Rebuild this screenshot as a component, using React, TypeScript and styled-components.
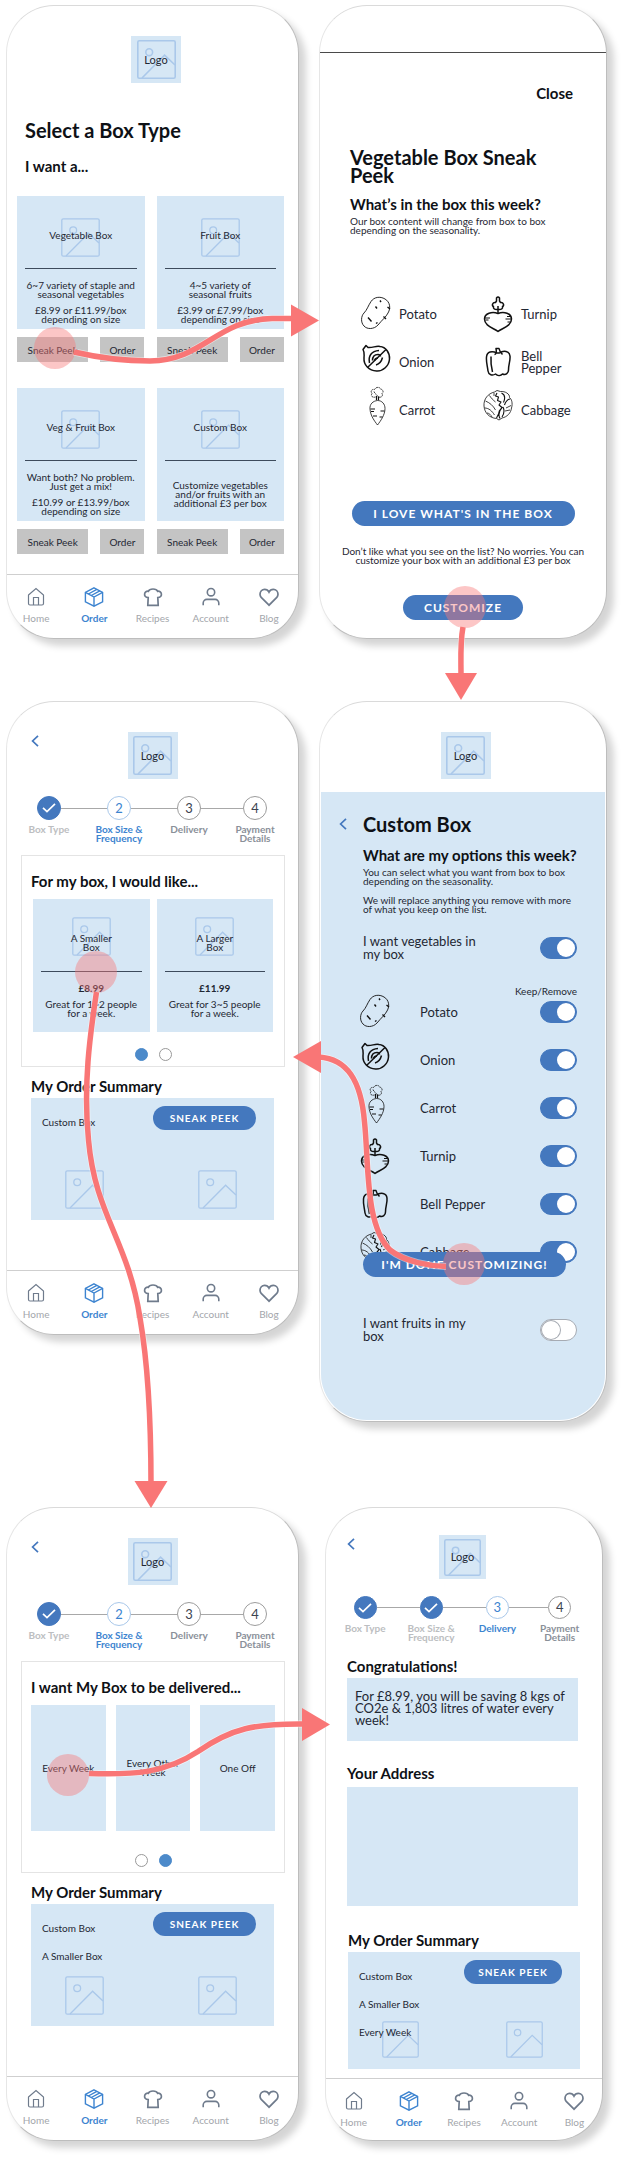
import React from "react";
import styled, { createGlobalStyle, css } from "styled-components";

const color = {
  ink: "#0e1116",
  text: "#1f2733",
  pale: "#d6e7f5",
  sketch: "#aac8ea",
  blue: "#4478be",
  link: "#3d84d0",
  grey: "#c4c4c4",
  muted: "#a3a6ab",
  slate: "#6f7b8c",
  coral: "#f97676",
};

const GlobalStyle = createGlobalStyle`
  * { box-sizing: border-box; }
  body { margin: 0; background: #fff; }
  body, button, input, textarea { font-family: Lato, "Open Sans", sans-serif; color: ${color.text}; }
  h1, h2, h3, p, ul, ol { margin: 0; padding: 0; }
  ul, ol { list-style: none; }
  button { border: 0; padding: 0; background: none; cursor: pointer; }
`;

/* ---------- board and phone frames ---------- */

const Board = styled.main`
  position: relative;
  display: grid;
  grid-template-columns: 293fr 288fr;
  gap: 62px 20px;
  align-items: start;
  padding: 5px 23px 23px 6px;
`;

const Phone = styled.section<{ $tall?: boolean; $last?: boolean; $narrow?: boolean }>`
  display: flex;
  flex-direction: column;
  min-height: ${(p) => (p.$tall ? 721 : 634)}px;
  margin: ${(p) => (p.$last ? "23px" : "0")} ${(p) => (p.$narrow ? "4px 0 6px" : "0 0")};
  border: 1px solid;
  border-color: #dadada #bdbdbd #bdbdbd #e6e6e6;
  border-radius: 48px;
  background: #fff;
  box-shadow: 7px 7px 7px rgba(0, 0, 0, 0.17);
  overflow: hidden;
`;

/* ---------- text ---------- */

const Title = styled.h1`
  font-size: 20px;
  line-height: 24px;
  font-weight: 700;
  color: ${color.ink};
`;

const Heading = styled.h2`
  font-size: 15px;
  line-height: 18px;
  font-weight: 700;
  color: ${color.ink};
`;

const Small = styled.p`
  font-size: 10px;
  line-height: 9px;
`;

/* ---------- placeholder pictures ---------- */

const Stack = styled.div`
  display: grid;
  place-items: center;
  > * { grid-area: 1 / 1; }
`;

const Picture = ({ size = 39, bold = false }: { size?: number; bold?: boolean }) => (
  <svg width={size} height={size} viewBox="0 0 39 39" fill="none" stroke={color.sketch} strokeWidth={bold ? 1.6 : 1.3} aria-hidden="true">
    <rect x="0.8" y="0.8" width="37.4" height="37.4" rx="1.5" />
    <circle cx="12.2" cy="12.2" r="3.4" />
    <path d="M5 38 27.6 15.2 38 25" />
  </svg>
);

const LogoBox = styled(Stack)<{ $compact?: boolean }>`
  width: ${(p) => (p.$compact ? 47 : 50)}px;
  height: ${(p) => (p.$compact ? 44 : 47)}px;
  background: ${color.pale};
  font-size: 11px;
  line-height: 12px;
`;

const Header = styled.header<{ $shift?: number; $compact?: boolean }>`
  display: grid;
  grid-template-columns: 1fr auto 1fr;
  align-items: start;
  margin-top: ${(p) => (p.$compact ? 27 : 30)}px;
  padding-left: ${(p) => p.$shift ?? 0}px;
  padding-right: ${(p) => (p.$compact ? 3 : 0)}px;
  > :last-child { grid-column: 2; }
`;

const BackButton = styled.button<{ $inset?: number }>`
  display: block;
  width: 8px;
  height: 12px;
  ${(p) => p.$inset && css`margin: 3px 0 0 ${p.$inset}px;`}
  svg { display: block; }
`;

const Back = ({ inset }: { inset?: number }) => (
  <BackButton type="button" aria-label="Back" $inset={inset}>
    <svg width="8" height="12" viewBox="0 0 8 12" fill="none" stroke={color.blue} strokeWidth="1.7">
      <path d="M7 0.8 1.6 6 7 11.2" />
    </svg>
  </BackButton>
);

const Logo = ({ back, shift, compact }: { back?: boolean; shift?: number; compact?: boolean }) => (
  <Header $shift={shift} $compact={compact}>
    {back && <Back inset={compact ? 21 : 24} />}
    <LogoBox $compact={compact}>
      <Picture size={compact ? 37 : 39} bold />
      <span>Logo</span>
    </LogoBox>
  </Header>
);

/* ---------- buttons ---------- */

const GreyButton = styled.button`
  height: 25px;
  background: ${color.grey};
  font-size: 10px;
`;

const Pill = styled.button<{ $width: number; $small?: boolean; $over?: boolean }>`
  flex: none;
  width: ${(p) => p.$width}px;
  height: ${(p) => (p.$small ? 24 : 25)}px;
  border-radius: 13px;
  background: ${color.blue};
  color: #fff;
  font-size: ${(p) => (p.$small ? 10 : 12)}px;
  font-weight: 700;
  letter-spacing: 1px;
  white-space: nowrap;
  ${(p) => p.$over && css`position: relative;`}
`;

/* ---------- bottom navigation ---------- */

const NavBar = styled.nav<{ $compact?: boolean }>`
  display: flex;
  flex: none;
  height: ${(p) => (p.$compact ? 62 : 64)}px;
  margin-top: auto;
  border-top: 1px solid #cfcfcf;
`;

const NavLink = styled.a<{ $active?: boolean }>`
  flex: 1;
  display: flex;
  flex-direction: column;
  align-items: center;
  padding-top: 12px;
  gap: 5px;
  color: ${(p) => (p.$active ? color.link : color.muted)};
  font-size: 10px;
  font-weight: ${(p) => (p.$active ? 700 : 400)};
  line-height: 12px;
  text-decoration: none;
  svg { stroke: ${(p) => (p.$active ? color.link : color.slate)}; }
`;

const navIcons: Record<string, React.ReactNode> = {
  Home: (
    <g strokeWidth="1.2">
      <path d="M2.5 8 10 1.5 17.5 8V16.5a1.5 1.5 0 0 1-1.5 1.5H4a1.5 1.5 0 0 1-1.5-1.5Z" />
      <path d="M7.5 18V10.5h5V18" />
    </g>
  ),
  Order: (
    <g strokeWidth="1.4">
      <path d="M10 .9 18.6 5.4V14.8L10 19.2 1.4 14.8V5.4Z" />
      <path d="M1.4 5.4 10 10 18.6 5.4M10 10V19.2M4.4 7 12.8 2.4M7.3 8.5 15.8 3.9" />
    </g>
  ),
  Recipes: (
    <path strokeWidth="1.7" d="M5.2 10.6C2.6 10.6 1.4 8.9 1.6 7 1.8 5 3.6 3.9 5.4 4.3 6 2.7 7.9 2 10 2s4 .7 4.6 2.3C16.4 3.9 18.2 5 18.4 7 18.6 8.9 17.4 10.6 14.8 10.6L15.2 18.4H4.8Z" />
  ),
  Account: (
    <g strokeWidth="1.6">
      <circle cx="10" cy="5.2" r="3.7" />
      <path d="M2.2 18.3V16a3.6 3.6 0 0 1 3.6-3.6h8.4A3.6 3.6 0 0 1 17.8 16v2.3" />
    </g>
  ),
  Blog: (
    <path strokeWidth="1.7" d="M10 18.2 2.2 10.4A4.8 4.8 0 0 1 1 7.3C1 4.4 3 2.3 5.6 2.3 7.5 2.3 9.2 3.4 10 5.1 10.8 3.4 12.5 2.3 14.4 2.3 17 2.3 19 4.4 19 7.3A4.8 4.8 0 0 1 17.8 10.4Z" />
  ),
};

const BottomNav = ({ compact }: { compact?: boolean }) => (
  <NavBar $compact={compact}>
    {Object.keys(navIcons).map((name) => (
      <NavLink key={name} href="#" $active={name === "Order"}>
        <svg width="20" height="20" viewBox="0 0 20 20" fill="none" aria-hidden="true">{navIcons[name]}</svg>
        {name}
      </NavLink>
    ))}
  </NavBar>
);

/* ---------- vegetables ---------- */

type Veg = "Potato" | "Onion" | "Carrot" | "Turnip" | "Bell Pepper" | "Cabbage";

const vegDrawings: Record<Veg, React.ReactNode> = {
  Potato: (
    <g strokeWidth="0.9">
      <path d="M4 19C7 16 8 12 11 7.5 14 3 20 2 25 5 30 8 31 14 28 19 26 23 22 26 18 31 14 35.5 7 35.5 4 32 0.5 28.5 1 22 4 19Z" />
      <path strokeWidth="1.4" d="M8 23.5 11.5 27.5M15.5 12.5 17 14.5M20 6.5 21 8M27.5 13 30 15M23.5 22.5 26 25M16 29.5 17.5 28.5" />
    </g>
  ),
  Onion: (
    <g strokeWidth="1.5">
      <path d="M3 7.5 6 3.5 8 5.5C13 6 16 3.5 20 4.5 26 5 30 11 29.5 17 29 24 23 29.5 16.5 29 9 28.5 3.5 23 4 16 4 12.5 5 11 3 7.5Z" />
      <path d="M7.5 25.5 26 7.5M9.5 21C8 14 11.5 9 19 8.5M12.5 18.5C12.5 14.5 14.5 12.5 18 12.5 19.5 12.5 20.5 13 20.5 14.5" />
      <path d="M14.5 18.5C15 16.5 16 16 18 16M16 23C19 22 21.5 19.5 22.5 15.5" />
    </g>
  ),
  Carrot: (
    <g strokeWidth="0.8">
      <path d="M17.5 10.5C13 11 9.5 14 10 19 10.5 26 14.5 31 17.5 35 20.5 31 25 25 25 18.5 25 14 22 10.5 17.5 10.5Z" />
      <path strokeWidth="1.2" d="M16.5 10V6M18.5 10V6.5M10.5 19H15M11 21.5H14M24.5 21H20.5M13 26H17M22.5 27H19.5" />
      <path strokeDasharray="2 .6" d="M15.5 7C12 8 10.5 5.5 12 3.5 10 1 12-1 14.5-.5 16-3.5 20-3 20.5-1 23-.5 24 2 22 3.5 23.5 6 21 8 18.5 7 17 4.5 14.5 4 14 1.5" />
    </g>
  ),
  Turnip: (
    <g strokeWidth="1.5">
      <path d="M16 19.5C10 17 2.5 19.5 2.5 25 2.5 32 11.5 34 16 37.5 20.5 34 29.5 32 29.5 25 29.5 19.5 22 17 16 19.5Z" />
      <path d="M16 19V12M16 15.5C12 16 11 14 11.5 12.5 9.5 11.5 10.5 8 13.5 8.5L14.5 7 14.5 4Q16 2 17.5 4L17.5 7 18.5 8.5C21.5 8 22.5 11.5 20.5 12.5 21 14 20 16 16 15.5Z" />
      <path strokeWidth="1.2" d="M3 24H8M3.5 26H6.5M29 22.5H25M29 25H23.5M28.5 28H25.5" />
    </g>
  ),
  "Bell Pepper": (
    <g strokeWidth="1.5">
      <path d="M15 11C10 8.5 5 9.5 4.5 15 4 20 5.5 24 6 29 6.5 33 10.5 34 13.5 32 16 34.5 19 33.5 20.5 32 24 33.5 26.5 31 26.5 28 26.5 22 28.5 19 28 14 27.5 9 21.5 8 17.5 11Z" />
      <path d="M12.5 12.5C15 12 14.5 9 14 6.5L17 6.5C17.5 9.5 18.5 10.5 20.5 12.5M9 14.5C8.5 21 9.5 26 10.5 30" />
    </g>
  ),
  Cabbage: (
    <g strokeWidth="0.8">
      <path d="M15 0.5 12.5 2C6 3.5 1.5 9 2 16 2.5 23 7.5 28 14.5 28.5L17 30 20 28C25 27 29 23 29.5 18 31 13 29.5 9 27.5 7.5 28 4 23 1 18.5 1.5Z" />
      <path strokeWidth="1.1" d="M15 3 13.5 6 16.5 7 15.5 10.5 19 12 17 15 20 17.5 17.5 20.5 16.5 24 14.5 28M20.5 17C17 21 16 25 18 28.5M21 17C22.5 20 22 24 20 27M19.5 3C24 5 23 9 21.5 12.5M28 9C24.5 9.5 23.5 12 22.5 15" />
      <path d="M3.5 11C8 13 11 15.5 13.5 20M2.5 18C7 18 10 21 12.5 25M7.5 5.5C9 8 11 10 13.5 12M23 21 28 20M24 18 29 15.5M12 3V6M5 23C7 23 9 25 10 27" />
    </g>
  ),
};

const VegIcon = ({ name }: { name: Veg }) => (
  <svg width="32" height="40" viewBox="0 0 32 40" fill="none" stroke="#111" strokeLinejoin="round" overflow="visible" aria-hidden="true">
    {vegDrawings[name]}
  </svg>
);

/* ---------- product cards ---------- */

const Card = styled.article<{ $topPad: number }>`
  display: flex;
  flex-direction: column;
  height: 133px;
  padding: ${(p) => p.$topPad}px 8px 0;
  background: ${color.pale};
  text-align: center;
`;

const CardName = styled.h3<{ $low?: boolean }>`
  max-width: ${(p) => (p.$low ? 50 : 100)}px;
  padding-top: ${(p) => (p.$low ? 13 : 0)}px;
  margin-bottom: ${(p) => (p.$low ? 0 : 4)}px;
  font-size: 10px;
  line-height: 9px;
  font-weight: 400;
`;

const CardRule = styled.hr<{ $gap: number }>`
  width: 100%;
  height: 1px;
  margin: ${(p) => p.$gap}px 0 0;
  border: 0;
  background: #3d4b5c;
`;

const CardText = styled.div<{ $priced?: boolean }>`
  flex: 1;
  display: flex;
  flex-direction: column;
  justify-content: center;
  gap: 7px;
  margin: 0 -6px;
  padding: ${(p) => (p.$priced ? "0 0 3px" : "7px 0 0")};
  white-space: pre-line;
`;

const Price = styled.strong`
  font-size: 10px;
  line-height: 10px;
`;

const BoxGrid = styled.div`
  display: grid;
  grid-template-columns: 1fr 1fr;
  gap: 26px 12px;
  margin-top: 21px;
  padding: 0 14px 0 10px;
`;

const Actions = styled.div`
  display: grid;
  grid-template-columns: 71fr 44fr;
  gap: 12px;
  margin-top: 8px;
`;

const boxes = [
  { name: "Vegetable Box", lines: ["6~7 variety of staple and\nseasonal vegetables", "£8.99 or £11.99/box\ndepending on size"] },
  { name: "Fruit Box", lines: ["4~5 variety of\nseasonal fruits", "£3.99 or £7.99/box\ndepending on size"] },
  { name: "Veg & Fruit Box", lines: ["Want both? No problem.\nJust get a mix!", "£10.99 or £13.99/box\ndepending on size"] },
  { name: "Custom Box", lines: ["Customize vegetables\nand/or fruits with an\nadditional £3 per box"] },
];

const Intro = styled.div`
  display: grid;
  gap: 15px;
  margin-top: 35px;
  padding-left: 18px;
`;

const SelectBox = () => (
  <Phone>
    <Logo shift={7} />
    <Intro>
      <Title>Select a Box Type</Title>
      <Heading>I want a...</Heading>
    </Intro>
    <BoxGrid>
      {boxes.map((b) => (
        <div key={b.name}>
          <Card $topPad={22}>
            <Stack>
              <Picture />
              <CardName>{b.name}</CardName>
            </Stack>
            <CardRule $gap={11} />
            <CardText>
              {b.lines.map((l) => <Small key={l}>{l}</Small>)}
            </CardText>
          </Card>
          <Actions>
            <GreyButton type="button">Sneak Peek</GreyButton>
            <GreyButton type="button">Order</GreyButton>
          </Actions>
        </div>
      ))}
    </BoxGrid>
    <BottomNav />
  </Phone>
);

/* ---------- sneak peek ---------- */

const SheetTop = styled.div`
  height: 47px;
  border-bottom: 1px solid #4a4a4a;
`;

const CloseButton = styled.button`
  align-self: flex-end;
  margin: 31px 33px 46px 0;
  font-size: 15px;
  line-height: 18px;
  font-weight: 700;
  color: ${color.ink};
`;

const PeekIntro = styled.div`
  padding: 0 40px 0 30px;
  ${Title} { line-height: 18px; }
  ${Heading} { margin: 11px 0 4px; }
`;

const VegList = styled.ul`
  display: grid;
  grid-template-columns: 122px 1fr;
  grid-auto-rows: 48px;
  margin-top: 55px;
  padding: 0 20px 0 40px;
  li {
    display: flex;
    align-items: center;
    gap: 7px;
    font-size: 13px;
    line-height: 12px;
    white-space: pre-line;
  }
`;

const PeekActions = styled.div`
  display: flex;
  flex-direction: column;
  align-items: center;
  margin-top: 67px;
  text-align: center;
  ${Small} { margin: 21px 0 30px; white-space: pre-line; }
`;

const peekOrder: Veg[] = ["Potato", "Turnip", "Onion", "Bell Pepper", "Carrot", "Cabbage"];

const SneakPeek = () => (
  <Phone>
    <SheetTop />
    <CloseButton type="button">Close</CloseButton>
    <PeekIntro>
      <Title>Vegetable Box Sneak Peek</Title>
      <Heading>What’s in the box this week?</Heading>
      <Small>Our box content will change from box to box depending on the seasonality.</Small>
    </PeekIntro>
    <VegList>
      {peekOrder.map((v) => (
        <li key={v}><VegIcon name={v} />{v.replace(" ", "\n")}</li>
      ))}
    </VegList>
    <PeekActions>
      <Pill type="button" $width={223}>I LOVE WHAT'S IN THE BOX</Pill>
      <Small>{"Don’t like what you see on the list? No worries. You can\ncustomize your box with an additional £3 per box"}</Small>
      <Pill type="button" $width={120}>CUSTOMIZE</Pill>
    </PeekActions>
  </Phone>
);

/* ---------- progress steps ---------- */

type StepState = "done" | "current" | "next";

const StepList = styled.ol<{ $compact?: boolean }>`
  display: grid;
  grid-template-columns: 70fr 70fr 70fr 62fr;
  margin-top: 17px;
  padding: ${(p) => (p.$compact ? "0 13px 0 6px" : "0 12px 0 7px")};
`;

const Step = styled.li<{ $state: StepState }>`
  text-align: center;
  white-space: pre-line;
  font-size: 10px;
  line-height: 9px;
  font-weight: 700;
  color: ${(p) => ({ done: "#bcbec1", current: color.link, next: "#8a9099" })[p.$state]};
`;

const StepTrack = styled.div`
  display: flex;
  align-items: center;
  margin-bottom: 5px;
`;

const Line = styled.span<{ $hidden?: boolean }>`
  flex: 1;
  height: 1px;
  background: ${(p) => (p.$hidden ? "transparent" : "#a8a8a8")};
`;

const Dot = styled.span<{ $state: StepState; $compact?: boolean }>`
  display: grid;
  place-items: center;
  width: ${(p) => (p.$compact ? 23 : 24)}px;
  height: ${(p) => (p.$compact ? 23 : 24)}px;
  border: 1px solid ${(p) => ({ done: color.blue, current: "#a9c8ea", next: "#9c9c9c" })[p.$state]};
  border-radius: 50%;
  background: ${(p) => (p.$state === "done" ? color.blue : "#fff")};
  color: ${(p) => (p.$state === "current" ? color.link : "#3c4450")};
  font-size: 13px;
  font-weight: 400;
`;

const stepNames = ["Box Type", "Box Size &\nFrequency", "Delivery", "Payment\nDetails"];

const Steps = ({ current, compact }: { current: number; compact?: boolean }) => (
  <StepList $compact={compact}>
    {stepNames.map((name, i) => {
      const n = i + 1;
      const state: StepState = n < current ? "done" : n === current ? "current" : "next";
      return (
        <Step key={name} $state={state}>
          <StepTrack>
            <Line $hidden={i === 0} />
            <Dot $state={state} $compact={compact}>
              {state === "done" ? (
                <svg width="14" height="10" viewBox="0 0 14 10" fill="none" stroke="#fff" strokeWidth="1.7" aria-label="Done">
                  <path d="M1 4.8 5 8.6 13 0.9" />
                </svg>
              ) : n}
            </Dot>
            <Line $hidden={i === 3} />
          </StepTrack>
          {name}
        </Step>
      );
    })}
  </StepList>
);

/* ---------- choice panels and order summary ---------- */

const Panel = styled.section`
  margin: 12px 13px 0 14px;
  padding: 16px 9px 5px;
  border: 1px solid #e4e4e4;
`;

const Choices = styled.div<{ $gap: number; $inset?: number }>`
  display: grid;
  grid-auto-flow: column;
  grid-auto-columns: 1fr;
  gap: ${(p) => p.$gap}px;
  margin: 9px ${(p) => p.$inset ?? 0}px 0;
`;

const DeliveryChoice = styled.button`
  height: 126px;
  padding: 0 6px;
  background: ${color.pale};
  font-size: 10px;
  line-height: 9px;
`;

const Pager = styled.div<{ $space: number }>`
  display: flex;
  justify-content: center;
  gap: 11px;
  margin-top: ${(p) => p.$space}px;
`;

const PagerDot = styled.button<{ $on?: boolean }>`
  width: 13px;
  height: 13px;
  border: 1px solid ${(p) => (p.$on ? "#4c8aca" : "#999")};
  border-radius: 50%;
  background: ${(p) => (p.$on ? "#4c8aca" : "#fff")};
`;

const SummarySection = styled.section<{ $space: number; $compact?: boolean }>`
  margin-top: ${(p) => p.$space}px;
  padding: 0 ${(p) => (p.$compact ? 22 : 24)}px;
`;

const SummaryBox = styled.div<{ $height: number }>`
  display: grid;
  height: ${(p) => p.$height}px;
  margin-top: 3px;
  background: ${color.pale};
  > * { grid-area: 1 / 1; }
`;

const SummaryPictures = styled.div`
  display: flex;
  align-items: flex-end;
  justify-content: space-between;
  padding: 0 37px 11px 34px;
`;

const SummaryContent = styled.div`
  display: flex;
  justify-content: space-between;
  align-items: flex-start;
  padding: 8px 18px 0 11px;
  ul { padding-top: 2px; }
  li { font-size: 10px; line-height: 28px; }
`;

const OrderSummary = ({ items, space = 10, height = 122, compact }: { items: string[]; space?: number; height?: number; compact?: boolean }) => (
  <SummarySection $space={space} $compact={compact}>
    <Heading>My Order Summary</Heading>
    <SummaryBox $height={height}>
      <SummaryPictures>
        <Picture size={compact ? 37 : 39} />
        <Picture size={compact ? 37 : 39} />
      </SummaryPictures>
      <SummaryContent>
        <ul>{items.map((i) => <li key={i}>{i}</li>)}</ul>
        <Pill type="button" $small $width={compact ? 98 : 103}>SNEAK PEEK</Pill>
      </SummaryContent>
    </SummaryBox>
  </SummarySection>
);

const sizes = [
  { name: "A Smaller Box", price: "£8.99", text: "Great for 1~2 people\nfor a week." },
  { name: "A Larger Box", price: "£11.99", text: "Great for 3~5 people\nfor a week." },
];

const BoxSize = () => (
  <Phone>
    <Logo back />
    <Steps current={2} />
    <Panel>
      <Heading>For my box, I would like...</Heading>
      <Choices $gap={7} $inset={2}>
        {sizes.map((s) => (
          <Card key={s.name} $topPad={18}>
            <Stack>
              <Picture />
              <CardName $low>{s.name}</CardName>
            </Stack>
            <CardRule $gap={15} />
            <CardText $priced>
              <Price>{s.price}</Price>
              <Small>{s.text}</Small>
            </CardText>
          </Card>
        ))}
      </Choices>
      <Pager $space={16}>
        <PagerDot type="button" aria-label="Page 1" $on />
        <PagerDot type="button" aria-label="Page 2" />
      </Pager>
    </Panel>
    <OrderSummary items={["Custom Box"]} />
    <BottomNav />
  </Phone>
);

const DeliveryFrequency = () => (
  <Phone $last>
    <Logo back />
    <Steps current={2} />
    <Panel>
      <Heading>I want My Box to be delivered...</Heading>
      <Choices $gap={10}>
        <DeliveryChoice type="button">Every Week</DeliveryChoice>
        <DeliveryChoice type="button">Every Other Week</DeliveryChoice>
        <DeliveryChoice type="button">One Off</DeliveryChoice>
      </Choices>
      <Pager $space={23}>
        <PagerDot type="button" aria-label="Page 1" />
        <PagerDot type="button" aria-label="Page 2" $on />
      </Pager>
    </Panel>
    <OrderSummary items={["Custom Box", "A Smaller Box"]} />
    <BottomNav />
  </Phone>
);

/* ---------- custom box ---------- */

const BluePanel = styled.section`
  flex: 1;
  margin: 13px 1px 1px;
  padding: 20px 28px 0 0;
  border-radius: 0 0 46px 46px;
  background: ${color.pale};
`;

const TitleRow = styled.div`
  display: flex;
  align-items: center;
  gap: 16px;
  padding-left: 18px;
`;

const OptionsIntro = styled.div`
  padding: 10px 0 0 42px;
  ${Heading} { white-space: nowrap; }
  ${Small} { margin: 4px 0 10px; white-space: pre-line; }
`;

const GroupRow = styled.label<{ $space: number }>`
  display: flex;
  align-items: center;
  justify-content: space-between;
  margin-top: ${(p) => p.$space}px;
  padding-left: 42px;
  font-size: 13px;
  line-height: 13px;
  span { width: 120px; }
`;

const Switch = styled.input.attrs({ type: "checkbox" })`
  appearance: none;
  flex: none;
  display: flex;
  align-items: center;
  width: 37px;
  height: 22px;
  margin: 0;
  padding: 1px;
  border: 1px solid #a6abb3;
  border-radius: 11px;
  background: #fff;
  &::before {
    content: "";
    width: 18px;
    height: 18px;
    border-radius: 50%;
    background: #fff;
    box-shadow: 0 0 0 1px #a6abb3;
  }
  &:checked {
    justify-content: flex-end;
    border-color: ${color.blue};
    background: ${color.blue};
  }
  &:checked::before { box-shadow: none; }
`;

const KeepRemove = styled.p`
  margin-top: 25px;
  font-size: 10px;
  line-height: 10px;
  text-align: right;
`;

const OptionList = styled.ul`
  display: grid;
  gap: 16px;
  label {
    display: grid;
    grid-template: 32px / 61px 1fr auto;
    align-items: center;
    padding-left: 38px;
    font-size: 13px;
  }
`;

const DoneRow = styled.div`
  margin: -16px 0 0 42px;
`;

const optionOrder: Veg[] = ["Potato", "Onion", "Carrot", "Turnip", "Bell Pepper", "Cabbage"];

const CustomBox = () => (
  <Phone $tall>
    <Logo shift={5} />
    <BluePanel>
      <TitleRow>
        <Back />
        <Title>Custom Box</Title>
      </TitleRow>
      <OptionsIntro>
        <Heading>What are my options this week?</Heading>
        <Small>{"You can select what you want from box to box\ndepending on the seasonality."}</Small>
        <Small>{"We will replace anything you remove with more\nof what you keep on the list."}</Small>
      </OptionsIntro>
      <GroupRow $space={21}>
        <span>I want vegetables in my box</span>
        <Switch defaultChecked />
      </GroupRow>
      <KeepRemove>Keep/Remove</KeepRemove>
      <OptionList>
        {optionOrder.map((v) => (
          <li key={v}>
            <label>
              <VegIcon name={v} />
              {v}
              <Switch defaultChecked />
            </label>
          </li>
        ))}
      </OptionList>
      <DoneRow>
        <Pill type="button" $width={203} $over>I'M DONE CUSTOMIZING!</Pill>
      </DoneRow>
      <GroupRow $space={40}>
        <span>I want fruits in my box</span>
        <Switch />
      </GroupRow>
    </BluePanel>
  </Phone>
);

/* ---------- delivery details ---------- */

const Field = styled.div<{ $space: number }>`
  display: flex;
  flex-direction: column;
  margin-top: ${(p) => p.$space}px;
  padding: 0 24px 0 21px;
`;

const FieldLabel = styled(Heading).attrs({ as: "label" })<{ htmlFor?: string }>``;

const Message = styled.p`
  height: 63px;
  margin-top: 3px;
  padding: 12px 8px;
  background: ${color.pale};
  font-size: 13px;
  line-height: 12px;
  white-space: pre-line;
`;

const AddressBox = styled.textarea`
  height: 119px;
  margin-top: 5px;
  padding: 8px;
  border: 0;
  background: ${color.pale};
  resize: none;
`;

const DeliveryDetails = () => (
  <Phone $last $narrow>
    <Logo back compact />
    <Steps current={3} compact />
    <Field $space={15}>
      <Heading>Congratulations!</Heading>
      <Message>{"For £8.99, you will be saving 8 kgs of\nCO2e & 1,803 litres of water every\nweek!"}</Message>
    </Field>
    <Field $space={23}>
      <FieldLabel htmlFor="address">Your Address</FieldLabel>
      <AddressBox id="address" />
    </Field>
    <OrderSummary items={["Custom Box", "A Smaller Box", "Every Week"]} space={25} height={117} compact />
    <BottomNav compact />
  </Phone>
);

/* ---------- flow arrows over the screens ---------- */

const FlowLayer = styled.svg`
  position: absolute;
  inset: 0;
  width: 100%;
  height: 100%;
  pointer-events: none;
`;

const taps = [
  [55, 348],
  [465, 607],
  [96, 972],
  [464, 1264],
  [68, 1775],
];

const flows = [
  { line: "M74 352C100 358 125 361 150 361C205 360 215 320 272 318.5H293", head: "M291 304.5V336.5L319 320.5Z" },
  { line: "M463 627C460 643 461 658 461 675", head: "M445 673H477L461 700Z" },
  { line: "M446 1266.5C430 1266 405 1262 390 1250C365 1225 369 1165 364.5 1122C361 1080 347 1059 319 1057", head: "M321 1041V1073L293 1057Z" },
  { line: "M96.5 992C90 1035 83 1085 88.5 1140C95 1215 128 1240 140 1318C149 1370 151 1430 151 1484", head: "M134.5 1481H167.5L151 1508Z" },
  { line: "M89 1773.5C135 1775 165 1773 198 1751.5C232 1728 255 1723.5 304 1724", head: "M302 1708V1741L330 1724.5Z" },
];

const FlowArrows = () => (
  <FlowLayer viewBox="0 0 630 2164" preserveAspectRatio="none" aria-hidden="true">
    {taps.map(([x, y]) => <circle key={y} cx={x} cy={y} r="21" fill={color.coral} fillOpacity="0.42" />)}
    {flows.map((f) => (
      <g key={f.line}>
        <path d={f.line} fill="none" stroke="#fff" strokeOpacity="0.5" strokeWidth="7" />
        <path d={f.line} fill="none" stroke={color.coral} strokeWidth="5.5" />
        <path d={f.head} fill={color.coral} />
      </g>
    ))}
  </FlowLayer>
);

export default function App() {
  return (
    <>
      <GlobalStyle />
      <Board>
        <SelectBox />
        <SneakPeek />
        <BoxSize />
        <CustomBox />
        <DeliveryFrequency />
        <DeliveryDetails />
        <FlowArrows />
      </Board>
    </>
  );
}
